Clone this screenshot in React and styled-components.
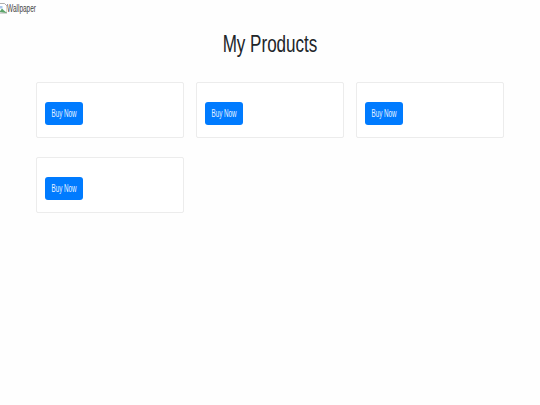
import styled, {createGlobalStyle} from "styled-components"

const GlobalStyle = createGlobalStyle`
    html, body {
        margin: 0;
        background: #fefefe;
        font-family: "Liberation Sans", Arial, sans-serif;
    }
`

const Page = styled.div`
    width: 540px;
    height: 405px;
    overflow: hidden;
    color: #212529;
`

const BrokenImage = styled.div`
    display: flex;
    align-items: center;
    height: 14px;
    padding-top: 1px;
    margin-bottom: -1px;
    font-size: 11px;
    color: #444;
`

const Alt = styled.span`
    display: inline-block;
    transform: scaleX(0.59);
    transform-origin: left center;
`

const Title = styled.h1`
    margin: 15px 0 24px;
    height: 29px;
    font-size: 24px;
    line-height: 29px;
    font-weight: 400;
    text-align: center;
    transform: scaleX(0.71);
`

const Grid = styled.div`
    display: grid;
    grid-template-columns: repeat(3, 148px);
    gap: 19px 12px;
    padding: 0 36px;
`

const Card = styled.div`
    box-sizing: border-box;
    height: 56px;
    padding: 19px 7.500px 0;
    background: #fff;
    border: 1px solid #ececec;
    border-radius: 2px;
`

const BuyButton = styled.button`
    display: flex;
    align-items: center;
    justify-content: center;
    width: 38px;
    height: 23px;
    padding: 0 0 1px 1px;
    border: 0;
    border-radius: 3px;
    background: #007bff;
    color: #eaf3ff;
    font-family: inherit;
    font-size: 11px;
`

const ButtonLabel = styled.span`
    flex: none;
    white-space: nowrap;
    transform: scaleX(0.57);
`

const BrokenIcon = () => (
    <svg width="7" height="11" viewBox="2 0 7 11">
        <path d="M1.500 .5h5l2.500 2.500v7h-7.500z" fill="#fff" stroke="#9a9a9a" strokeWidth="0.8" />
        <path d="M1.500 9l2.500-3.500 2 2 3 2.500z" fill="#5aa469" />
        <path d="M1.500 3h3v2.500h-3z" fill="#a9c8ee" />
    </svg>
)

const products = [1, 2, 3, 4]

const App = () => (
    <>
        <GlobalStyle />
        <Page>
            <BrokenImage>
                <BrokenIcon />
                <Alt>Wallpaper</Alt>
            </BrokenImage>
            <Title>My Products</Title>
            <Grid>
                {products.map(id => (
                    <Card key={id}>
                        <BuyButton>
                            <ButtonLabel>Buy Now</ButtonLabel>
                        </BuyButton>
                    </Card>
                ))}
            </Grid>
        </Page>
    </>
)

export default App
